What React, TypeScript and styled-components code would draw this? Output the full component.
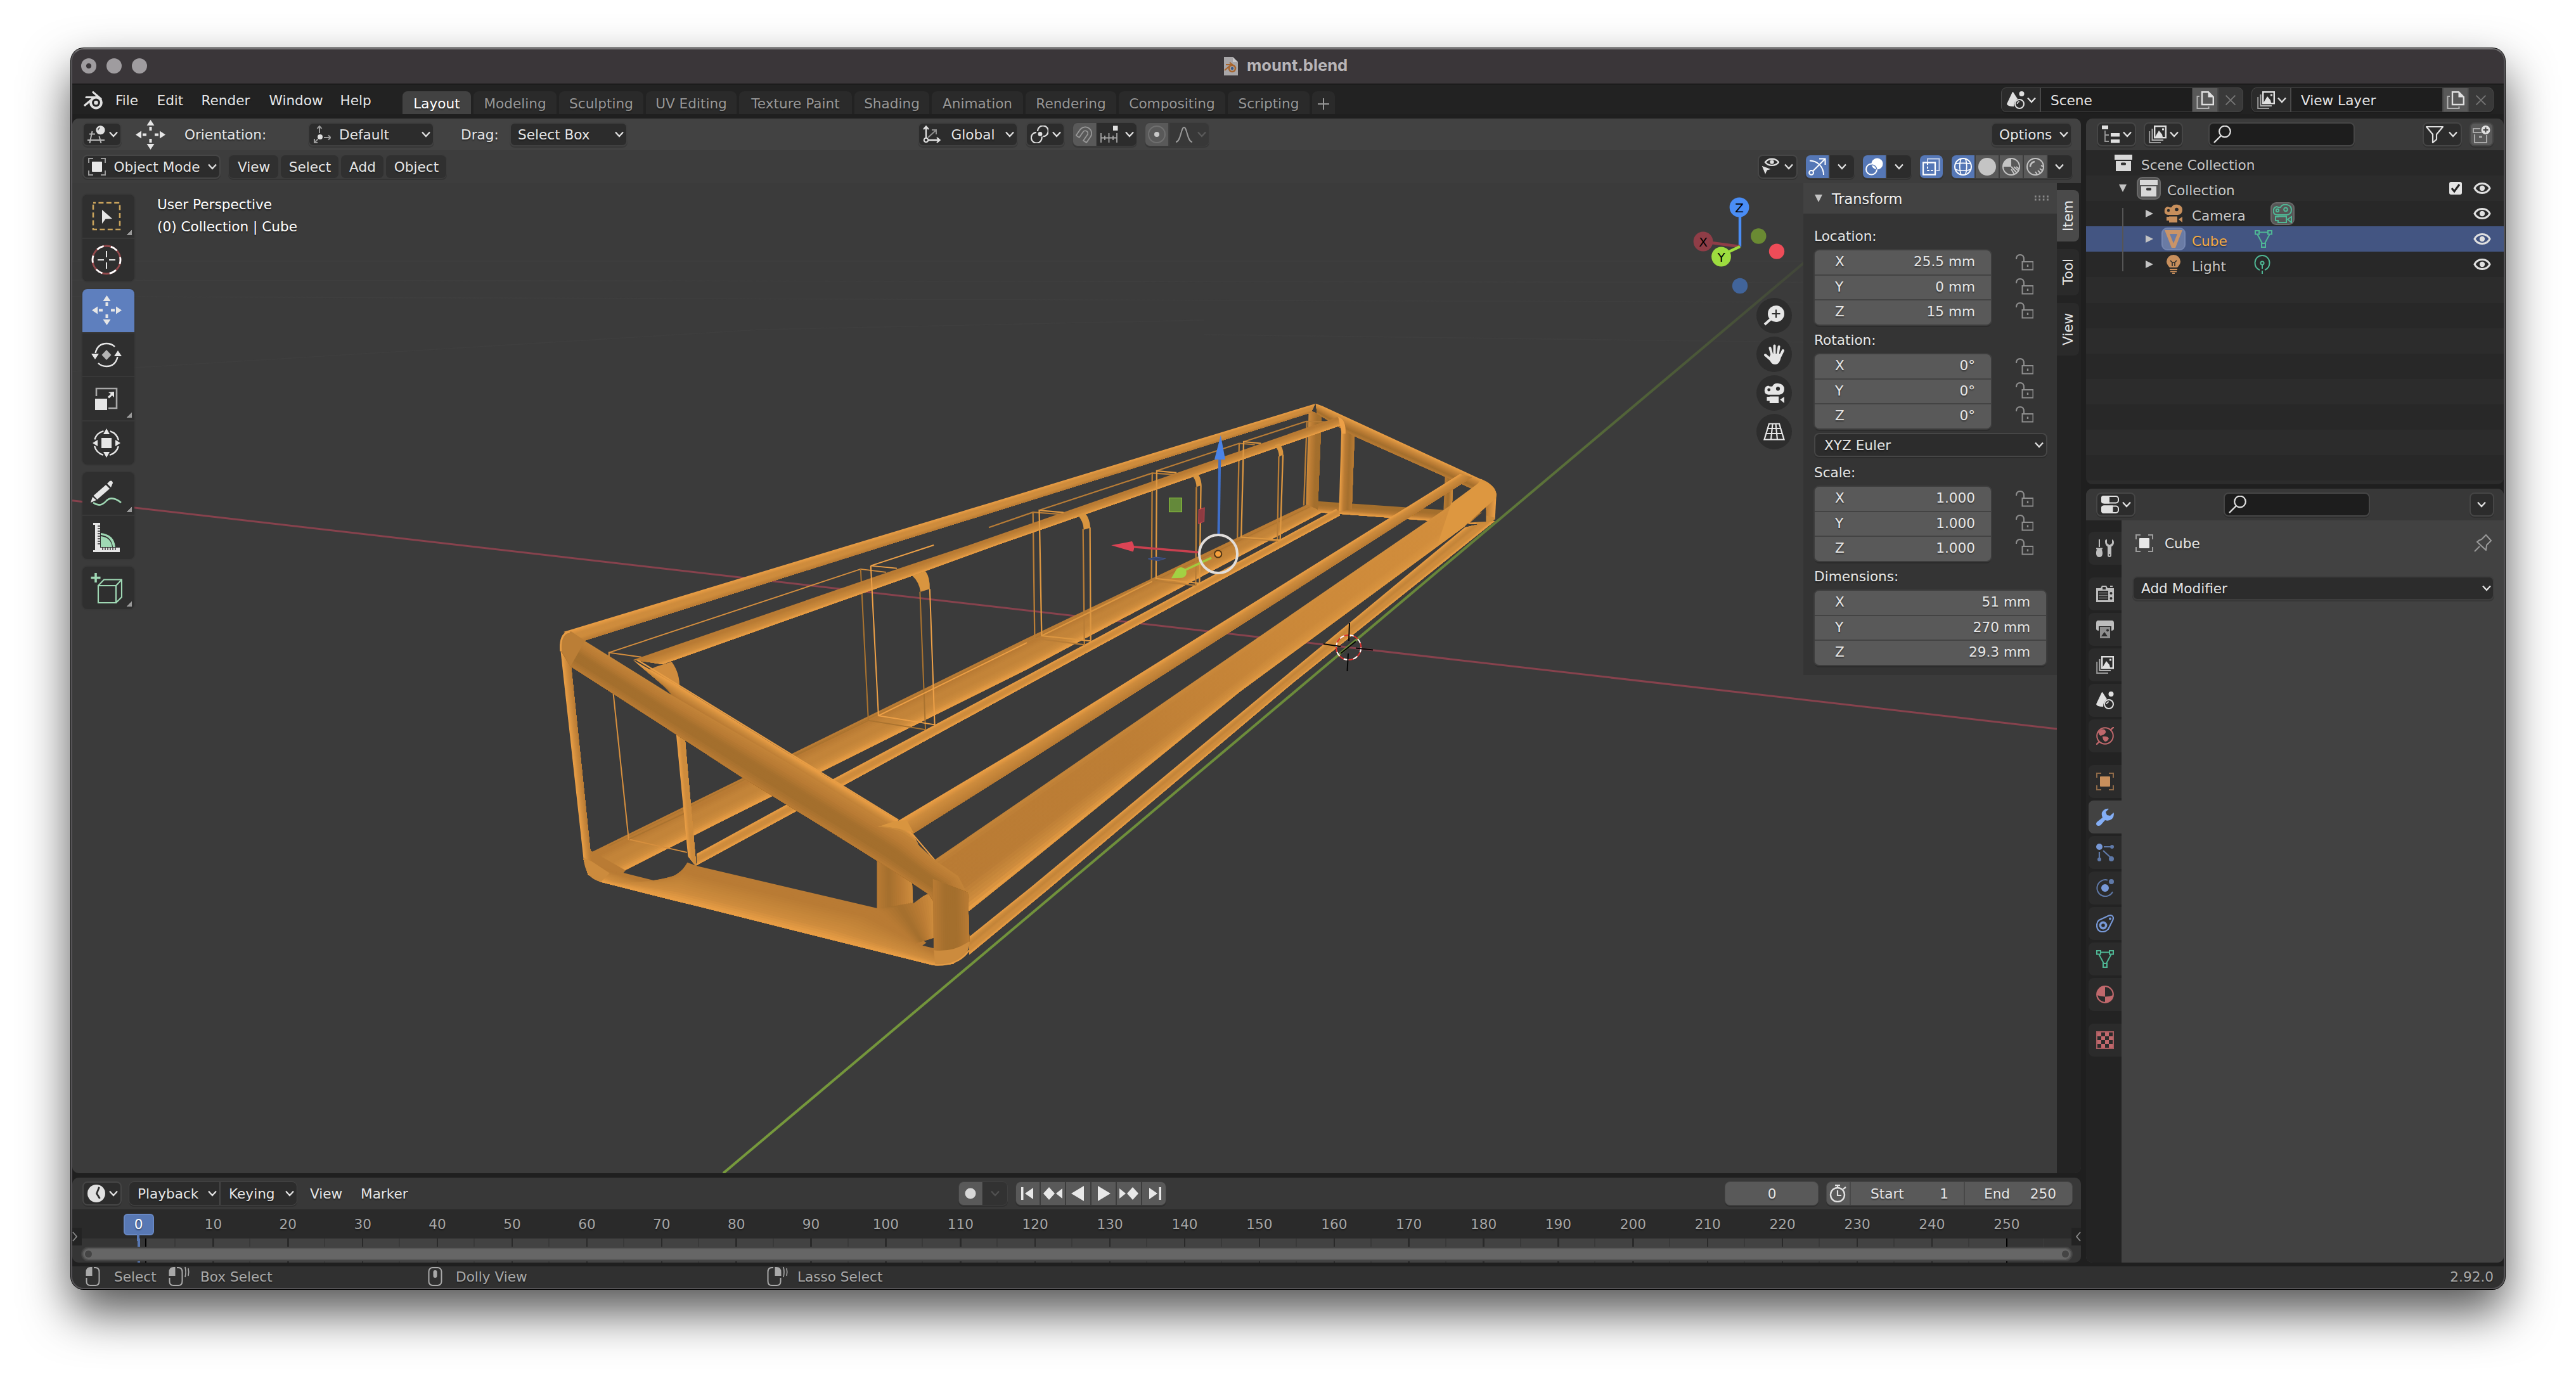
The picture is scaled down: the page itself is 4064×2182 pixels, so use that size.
import React from "react";
import styled, { createGlobalStyle, css } from "styled-components";

/* ---------- base ---------- */

const Global = createGlobalStyle`
  * { box-sizing: border-box; }
  html, body { margin: 0; padding: 0; background: #fff; }
  body {
    font-family: "DejaVu Sans", sans-serif;
    font-size: 21.6px;
    line-height: 1;
    color: #e6e6e6;
    overflow: hidden;
  }
  svg { display: block; flex: none; }
`;

const Desktop = styled.div`
  width: 4064px;
  height: 2182px;
  padding: 76px 112px 0;
  background: #fff;
  overflow: hidden;
`;

const Window = styled.div`
  position: relative;
  display: flex;
  flex-direction: column;
  width: 3840px;
  height: 1958px;
  padding: 0 2px;
  border-radius: 20px;
  background: #1f1f1f;
  overflow: hidden;
  text-shadow: 0 2px 2px rgba(0, 0, 0, 0.4);
  &::after {
    content: "";
    position: absolute;
    inset: 0;
    border: 2px solid #555356;
    border-top-color: #757375;
    border-radius: 20px;
    pointer-events: none;
  }
`;

const Shadow = styled.div`
  border-radius: 20px;
  box-shadow: 0 0 0 1px #050505, 0 36px 76px rgba(0, 0, 0, 0.68);
`;

const TitleBar = styled.div`
  display: flex;
  align-items: center;
  height: 57px;
  margin: 0 -2px;
  background: #3a3639;
  border-bottom: 1px solid #000;
  flex: none;
`;

const Lights = styled.div`
  display: flex;
  gap: 16px;
  padding-left: 16px;
  width: 1819px;
`;

const Light = styled.i<{ $dot?: boolean }>`
  width: 24px;
  height: 24px;
  border-radius: 50%;
  background: ${(p) =>
    p.$dot ? "radial-gradient(circle, #3a3639 0 3.6px, #9f9c9f 4.6px)" : "#9f9c9f"};
`;

const FileTitle = styled.span`
  margin: -3px 0 0 14px;
  font-family: Inter, sans-serif;
  font-weight: 700;
  font-size: 25.6px;
  color: #b8b5b8;
  text-shadow: none;
`;

/* ---------- generic parts ---------- */

const Spacer = styled.div`
  flex: 1;
`;

const Chev = ({ c = "#e0e0e0" }: { c?: string }) => (
  <svg width="16" height="10" viewBox="0 0 16 10">
    <path d="M2 1.5 L8 8 L14 1.5" fill="none" stroke={c} strokeWidth="2.4" />
  </svg>
);

type BoxProps = { $w?: number; $ml?: number; $bg?: string; $line?: string; $pl?: number; $pr?: number };

const Box = styled.div<BoxProps>`
  display: flex;
  align-items: center;
  justify-content: space-between;
  flex: none;
  width: ${(p) => (p.$w ? p.$w + "px" : "auto")};
  height: 38px;
  margin-left: ${(p) => p.$ml ?? 0}px;
  padding: 0 ${(p) => p.$pr ?? 6}px 0 ${(p) => p.$pl ?? 6}px;
  background: ${(p) => p.$bg ?? "#2c2c2c"};
  border: 2px solid ${(p) => p.$line ?? "#464646"};
  border-radius: 8px;
  box-shadow: 0 2px 0 rgba(0, 0, 0, 0.16);
  white-space: nowrap;
`;

const Join = styled.div<{ $ml?: number; $line?: string; $h?: number; $gap?: number }>`
  display: flex;
  flex: none;
  gap: ${(p) => p.$gap ?? 2}px;
  height: ${(p) => p.$h ?? 38}px;
  margin-left: ${(p) => p.$ml ?? 0}px;
  background: ${(p) => p.$line ?? "#3d3d3d"};
  border: 1px solid ${(p) => p.$line ?? "#3d3d3d"};
  border-radius: 8px;
  overflow: hidden;
  box-shadow: 0 2px 0 rgba(0, 0, 0, 0.16);
`;

const Seg = styled.div<{ $w: number; $bg?: string; $pl?: number; $pr?: number; $between?: boolean; $round?: boolean }>`
  display: flex;
  align-items: center;
  justify-content: ${(p) => (p.$between ? "space-between" : "center")};
  flex: none;
  width: ${(p) => p.$w}px;
  padding: 0 ${(p) => p.$pr ?? 0}px 0 ${(p) => p.$pl ?? 0}px;
  background: ${(p) => p.$bg ?? "#2c2c2c"};
  border-radius: ${(p) => (p.$round ? 7 : 0)}px;
  white-space: nowrap;
`;

const Txt = styled.span<{ $w?: number; $ml?: number; $c?: string }>`
  flex: none;
  width: ${(p) => (p.$w ? p.$w + "px" : "auto")};
  margin-left: ${(p) => p.$ml ?? 0}px;
  padding: 2px 0 0 1px;
  color: ${(p) => p.$c ?? "inherit"};
  white-space: nowrap;
`;

const Slot = styled.div<{ $w?: number; $ml?: number }>`
  flex: none;
  width: ${(p) => (p.$w ? p.$w + "px" : "auto")};
  margin-left: ${(p) => p.$ml ?? 0}px;
`;

/* ---------- icons ---------- */

const W = "#e0e0e0";

const Ico = ({ s = 28, v = 28, children }: { s?: number; v?: number; children: React.ReactNode }) => (
  <svg width={s} height={s} viewBox={`0 0 ${v} ${v}`} fill="none" stroke={W} strokeWidth="2">
    {children}
  </svg>
);

const BlenderLogo = () => (
  <svg width="31" height="29" viewBox="0 0 31 29" fill="none">
    <path d="M15 1.6 L27 12" stroke={W} strokeWidth="3.2" strokeLinecap="round" />
    <path d="M4 9.5 H20" stroke={W} strokeWidth="3" strokeLinecap="round" />
    <path d="M2 22 L15 11" stroke={W} strokeWidth="3.4" strokeLinecap="round" />
    <circle cx="19.5" cy="18" r="8.4" stroke={W} strokeWidth="4" />
    <circle cx="19.5" cy="18" r="3.3" fill={W} />
  </svg>
);

const BlendFile = () => (
  <svg width="22" height="29" viewBox="0 0 22 29" fill="none">
    <path d="M0 0 H14 L22 8 V29 H0 Z" fill="#a8a6a8" />
    <path d="M14 0 L22 8 H14 Z" fill="#c9c7c9" />
    <circle cx="13" cy="18" r="5" stroke="#a8652e" strokeWidth="2.6" />
    <circle cx="13" cy="18" r="2.2" fill="#3a5a86" />
    <path d="M3 12 H13 M1 21 L9 14 M9 8.5 L17 15" stroke="#a8652e" strokeWidth="2.2" />
  </svg>
);

const Icons: Record<string, React.ReactNode> = {
  editor3d: (
    <>
      <circle cx="20.5" cy="7.2" r="7" fill={W} stroke="none" />
      <path d="M16.8 7.5a4 4 0 0 1 3-4" stroke="#555" strokeWidth="1.5" />
      <path d="M3 13.5H12M0 23H27M7.5 9L3.5 28M18.5 17L21.5 28" stroke="#b5b5b5" />
    </>
  ),
  local: (
    <>
      <circle cx="11" cy="18" r="4" fill={W} stroke="none" />
      <path d="M10 12V1.5M6.5 5L10 1L13.5 5M17 19H27M24 15.5L27.5 19L24 22.5M7.5 21.5L2 27M2 21V27H7" stroke="#9a9a9a" />
    </>
  ),
  global: (
    <>
      <path d="M5 20V2M1 6L5 1.5L9 6M9 23H26M22 19L26.5 23L22 27" stroke={W} strokeWidth="2.3" />
      <circle cx="5" cy="23" r="3.3" stroke={W} />
      <path d="M8 19L20 8M14 7H21V14" stroke="#8f8f8f" strokeWidth="2" />
    </>
  ),
  pivot: (
    <>
      <path d="M11 9A8.4 8.4 0 1 1 19.5 17.2" strokeWidth="2.2" />
      <path d="M9 10.8A8.4 8.4 0 1 0 17.5 17.5" strokeWidth="2.2" />
      <circle cx="15" cy="13.4" r="3.4" fill={W} stroke="none" />
    </>
  ),
  magnet: (
    <g transform="rotate(35 14 14)" stroke="#989898" strokeWidth="1.8">
      <path d="M4 23V12a10 10 0 0 1 20 0V23H18V12a4 4 0 0 0-8 0V23Z" />
    </g>
  ),
  snap: (
    <>
      <rect x="20" y="0.5" width="7.5" height="7.5" fill={W} stroke="none" />
      <path d="M1 12V27M26 12V27M1 19.5H26M7 16V23M13.5 12V27M20 16V23" stroke="#a5a5a5" strokeWidth="1.8" />
    </>
  ),
  propEdit: (
    <>
      <circle cx="14" cy="14" r="13" stroke="#707070" />
      <circle cx="14" cy="14" r="4" fill="#c8c8c8" stroke="none" />
    </>
  ),
  falloff: <path d="M1 26C9 26 9 3 14 3S19 26 27 26" stroke="#999" />,
  eyeCursor: (
    <>
      <path d="M6 7C11 0 22 0 27 7C22 13.5 11 13.5 6 7Z" strokeWidth="2.4" />
      <circle cx="16.500" cy="6.6" r="3.2" fill={W} stroke="none" />
      <path d="M0 12L6 27L9 20L16 18Z" fill={W} stroke="#2c2c2c" strokeWidth="1" />
    </>
  ),
  gizmo: (
    <g stroke="#fff">
      <circle cx="4.6" cy="23.4" r="3.4" />
      <path d="M7 21L26 2M17 1.5H26.5V11" />
      <path d="M2 4.5C14 4.5 24 14 24 27" />
    </g>
  ),
  overlay: (
    <g stroke="#fff">
      <circle cx="18.5" cy="9.5" r="9" fill="#fff" stroke="none" />
      <circle cx="9.5" cy="18" r="8.5" />
      <path d="M10 11A8.5 8.5 0 0 1 18 18.500" stroke="#5577b6" strokeWidth="1.6" />
    </g>
  ),
  xray: (
    <g stroke="#fff">
      <path d="M8 6V1.5H26.5V20H22" stroke="#c3cfe8" />
      <rect x="1" y="7.5" width="19" height="19" strokeWidth="2.3" />
      <path d="M8 8V20H20" strokeDasharray="3.2 2.6" />
    </g>
  ),
  wire: (
    <g stroke="#fff">
      <circle cx="14" cy="14" r="13" />
      <path d="M2 9.500C8 8 20 8 26 9.500M1 18C8 21 20 21 27 18M11 1C8 8 8 20 11 27M17.5 1C20.5 8 20.5 20 17.5 27" strokeWidth="1.7" />
    </g>
  ),
  solid: <circle cx="14" cy="14" r="14" fill="#c4c4c4" stroke="none" />,
  matprev: (
    <g stroke="#c4c4c4">
      <path d="M14 0.5A13.5 13.5 0 0 0 0.5 14H14Z" fill="#c4c4c4" stroke="none" />
      <circle cx="14" cy="14" r="13" />
      <path d="M14 14L23 24M18 14L26 21M14 18L19 26M22 14L27 18" />
    </g>
  ),
  rendered: (
    <g stroke="#c4c4c4">
      <circle cx="14" cy="14" r="13" />
      <path d="M6 14a8 8 0 0 1 7-8" strokeWidth="2.6" />
      <path d="M23 12L27 14M21 17L25 20M18 20L22 24M14 22L17 26" />
    </g>
  ),
  scene: (
    <>
      <path d="M0 20L8.5 2Q9.5 0 10.5 2L17 12Q11 16 11 24Q1 24 0 20Z" fill={W} stroke="none" />
      <circle cx="23.5" cy="4" r="4" fill={W} stroke="none" />
      <circle cx="20" cy="20" r="7" />
      <path d="M16.5 20a3.5 3.5 0 0 1 3.4-3.6" strokeWidth="1.6" />
    </>
  ),
  layers: (
    <>
      <rect x="9.2" y="1.2" width="17.6" height="18" strokeWidth="2.4" />
      <path d="M10 18L16 8L21 14L22 18Z" fill={W} stroke="none" />
      <rect x="21" y="4.5" width="3" height="3" fill={W} stroke="none" />
      <path d="M5.5 5V23H23" stroke="#b0b0b0" />
      <path d="M1.2 9V27H19" stroke="#9a9a9a" />
    </>
  ),
  dup: (
    <>
      <path d="M9 1.2H19L26.8 9V21H9Z" strokeWidth="2.4" />
      <path d="M18.5 1V9.5H27Z" fill={W} stroke="none" />
      <path d="M5 8H1.5V27H19.5V24" stroke="#b4b4b4" />
    </>
  ),
  x: <path d="M6 6L22 22M22 6L6 22" stroke="#767676" strokeWidth="2" />,
  outliner: (
    <>
      <rect x="0" y="0" width="10" height="6" fill={W} stroke="none" />
      <rect x="14" y="12" width="14" height="5.5" fill={W} stroke="none" />
      <rect x="14" y="22" width="14" height="5.5" fill={W} stroke="none" />
      <path d="M5 8V25H11M5 15H11" stroke="#999" strokeWidth="1.8" />
    </>
  ),
  search: (
    <>
      <circle cx="18" cy="9.5" r="8.8" strokeWidth="2.2" />
      <path d="M12 16L1 27" strokeWidth="2.4" />
    </>
  ),
  filter: <path d="M1 2H27L17 14V22L11 27V14Z" strokeLinejoin="round" strokeWidth="2.2" />,
  newColl: (
    <>
      <path d="M12 5H1V11H14" stroke="#a8a8a8" />
      <path d="M3 14V27H22V15" stroke="#a8a8a8" />
      <path d="M10 18H15" stroke="#a8a8a8" strokeWidth="3" />
      <circle cx="20.5" cy="7" r="7" fill={W} stroke="none" />
      <path d="M20.5 3V11M16.5 7H24.5" stroke="#444" />
    </>
  ),
  collection: (
    <>
      <rect x="0" y="1" width="28" height="8" fill="#d8d8d8" stroke="none" />
      <rect x="2" y="11" width="24" height="16" fill="#d8d8d8" stroke="none" />
      <rect x="10" y="13.5" width="8" height="4" rx="1.5" fill="#333" stroke="none" />
    </>
  ),
  eye: (
    <>
      <path d="M2 14C7 4 21 4 26 14C21 24 7 24 2 14Z" strokeWidth="3" stroke={W} />
      <circle cx="14" cy="14" r="4.2" fill={W} stroke="none" />
    </>
  ),
  propsEd: (
    <>
      <rect x="1" y="1" width="26" height="10.5" rx="4" />
      <path d="M1 3Q1 1 4 1H12V11.5H4Q1 11.5 1 9Z" fill={W} />
      <rect x="1" y="16.5" width="26" height="10.5" rx="4" />
      <path d="M1 19Q1 16.5 4 16.5H17.5V27H4Q1 27 1 24Z" fill={W} />
    </>
  ),
  objectW: (
    <>
      <rect x="6" y="6" width="16" height="16" rx="1" fill="#e8e8e8" stroke="none" />
      <path d="M1 8V1H8M20 1H27V8M27 20V27H20M8 27H1V20" stroke="#9c9c9c" />
    </>
  ),
  object: (
    <>
      <rect x="6" y="6" width="16" height="16" rx="1" fill="#c88f5c" stroke="none" />
      <path d="M1 8V1H8M20 1H27V8M27 20V27H20M8 27H1V20" stroke="#8f6a48" />
    </>
  ),
  tools: (
    <g stroke="none" fill="#bdbdbd">
      <rect x="4" y="0" width="2" height="12" />
      <path d="M0 13.5H10V15.5H8.5Q10.5 19 10 23Q9.5 28 5 28T0 23Q-.5 19 1.5 15.5H0Z" />
      <path d="M14 3Q14 0 17 0V6L21 9L25 6V0Q28 1 28 5Q28 9 24 11.5V25Q24 28 21 28T18 25V11.5Q14 9 14 3Z" />
      <circle cx="21" cy="24.5" r="1.2" fill="#2b2b2b" />
    </g>
  ),
  render: (
    <g stroke="none" fill="#bdbdbd">
      <path d="M0 5H7L9 1H16L18 5H28V27H0Z" />
      <rect x="22" y="1" width="4" height="2" />
      <rect x="10" y="3" width="5" height="4" fill="#2b2b2b" />
      <rect x="3" y="9" width="16" height="15" fill="#2b2b2b" />
      <path d="M4 12.5H18M4 16.5H18M4 20.5H18" stroke="#777" strokeWidth="1.6" />
      <circle cx="23.5" cy="13" r="2" fill="#2b2b2b" />
      <circle cx="23.5" cy="21" r="2" fill="#2b2b2b" />
    </g>
  ),
  output: (
    <g stroke="none" fill="#bdbdbd">
      <path d="M3 0H25Q28 0 28 4V13Q28 16 24 16V9H4V16Q0 16 0 13V4Q0 0 3 0Z" />
      <path d="M6 10H22V28H6Z" fill="#8d8d8d" />
      <path d="M8 25L13 18L18 25Z" fill="#2b2b2b" />
      <circle cx="18" cy="15.5" r="2" fill="#2b2b2b" />
    </g>
  ),
  world: (
    <g stroke="#c0686c">
      <circle cx="14" cy="14" r="12.8" />
      <path d="M22 5L28 0M0 28L5 23" strokeWidth="2.4" />
      <path d="M3 8Q8 2 13 4Q18 8 12 12L7 14Q4 12 3 8Z M10 15Q18 14 20 18Q18 23 14 23Q10 20 10 15Z" fill="#c0686c" stroke="none" />
    </g>
  ),
  wrench: (
    <path
      d="M1 22L10 15Q7 8 11 4Q15 0 20 1L15 6L17 11L22 12L27.5 7Q29 13 25 17Q20 21 14 19L7 27Q3 29 1 27Q-1 25 1 22Z"
      fill="#84aef5"
      stroke="none"
    />
  ),
  particles: (
    <g stroke="#5f79a8" fill="#5f79a8">
      <circle cx="5" cy="5" r="5" fill="#7798d6" stroke="none" />
      <path d="M12 5H24M11 11L24 23M5 13V24" strokeWidth="2.2" />
      <circle cx="25" cy="5" r="3" stroke="none" />
      <circle cx="24" cy="24" r="4" stroke="none" />
      <circle cx="5" cy="25" r="3" stroke="none" />
    </g>
  ),
  physics: (
    <g stroke="#5f79a8">
      <path d="M18 1.6A13 13 0 1 0 26 20" />
      <circle cx="14" cy="14" r="6" fill="#7798d6" stroke="none" />
      <circle cx="24" cy="4" r="4" fill="#5f79a8" stroke="none" />
    </g>
  ),
  constraint: (
    <g stroke="#7798d6">
      <path d="M4 9L20 1.5Q26 0 27 5Q27 8 25 11L19 23Q14 28 8 27Q1 25 1 17Q1 12 4 9Z" strokeWidth="2.2" />
      <circle cx="11" cy="17" r="4.6" strokeWidth="3.6" />
      <circle cx="22" cy="6.5" r="2" fill="#7798d6" stroke="none" />
    </g>
  ),
  mesh: (
    <g stroke="#4fb795" strokeWidth="2">
      <rect x="1" y="1" width="6" height="5.5" />
      <rect x="21" y="1" width="6" height="5.5" />
      <rect x="11" y="21" width="6" height="6" />
      <path d="M7 3.5H21M4.5 7L12 21M23.5 7L16 21" />
    </g>
  ),
  material: (
    <g stroke="#c0686c">
      <circle cx="14" cy="14" r="12.8" strokeWidth="2.2" />
      <path d="M14 1A13 13 0 0 0 1 15Q7 17 14 17.5Z" fill="#c0686c" stroke="none" />
      <path d="M14 17.5Q21 17.5 27 15A13 13 0 0 1 14 27Z" fill="#c0686c" stroke="none" />
    </g>
  ),
  texture: (
    <g stroke="#a85c60">
      <rect x="1" y="1" width="26" height="26" />
      {[0, 1, 2, 3].map((r) =>
        [0, 1, 2, 3].map((c) =>
          (r + c) % 2 === 0 ? (
            <rect key={`${r}${c}`} x={2 + c * 6} y={2 + r * 6} width="6" height="6" fill="#c0686c" stroke="none" />
          ) : null
        )
      )}
    </g>
  ),
  clock: (
    <>
      <circle cx="14" cy="14" r="14" fill={W} stroke="none" />
      <path d="M18.500 4L14.500 14L19.500 22" stroke="#2c2c2c" strokeWidth="2.8" />
    </>
  ),
  stopwatch: (
    <>
      <circle cx="13" cy="16" r="11" strokeWidth="2.4" />
      <path d="M9 1.2H17M13 2V5M13 9V17H19M22 7L26 4" strokeWidth="2.2" />
    </>
  ),
  pin: (
    <path d="M1 27L9 19M5 12L19 25L20 17L27 10L19 1L12 8Q8 9 5 12Z" stroke="#9a9a9a" strokeLinejoin="round" />
  ),
  lock: (
    <g stroke="#8e8e8e">
      <path d="M1 9Q1 2 7 2T13 9V12" />
      <rect x="10.5" y="13" width="17" height="12.5" />
      <path d="M19 17.5V21" strokeWidth="2.4" />
    </g>
  ),
};

const I = ({ n, s }: { n: string; s?: number }) => <Ico s={s}>{Icons[n]}</Ico>;

const MovieCam = ({ c = "#c88f5c", outline = false, s = 30 }: { c?: string; outline?: boolean; s?: number }) => (
  <svg width={s} height={s} viewBox="0 0 30 30" fill={outline ? "none" : c} stroke={outline ? c : "none"} strokeWidth="2">
    <path d="M6 4Q9 6 12 5Q14 0 21 0.8Q29 2 29 9T22 17H6Q0 16 0.8 10Q1 5 6 4Z" />
    <circle cx="7" cy="10" r="2.2" fill={outline ? "none" : "#2b2b2b"} />
    <circle cx="20" cy="8.5" r="2.8" fill={outline ? "none" : "#2b2b2b"} />
    <path d="M8 19.5H21V29H8V26H4V20H8Z" />
    <path d="M23 24L29 20V29Z" />
  </svg>
);

const Bulb = () => (
  <svg width="26" height="30" viewBox="0 0 26 30" fill="#c88f5c">
    <path d="M13 0A11 11 0 0 1 24 10.5Q24 15 19 20H7Q2 15 2 10.5A11 11 0 0 1 13 0Z" />
    <path d="M8 9L11 12H15L18 9M11 12V18M15 12V18" stroke="#2b2b2b" strokeWidth="1.6" fill="none" />
    <rect x="7" y="22" width="12" height="2" />
    <rect x="8" y="25.4" width="10" height="2" />
    <rect x="11" y="28.5" width="4" height="1.5" />
  </svg>
);

const LightData = () => (
  <svg width="26" height="30" viewBox="0 0 26 30" fill="none" stroke="#4fb795" strokeWidth="2">
    <path d="M9 24Q1.5 21 1.5 12.5A11.5 11.5 0 0 1 24.5 12.5Q24.5 21 17 24" />
    <circle cx="13" cy="13" r="2.6" />
    <path d="M13 16V22M13 25V30" />
  </svg>
);

/* ---------- top bar ---------- */

const TopBar = styled.div`
  display: flex;
  height: 47px;
  flex: none;
  padding-left: 18px;
  background: #222;
`;

const Menus = styled.div`
  display: flex;
  align-items: center;
  height: 50px;
  width: 503px;
`;

const Tabs = styled.div`
  display: flex;
  align-items: flex-end;
  gap: 4px;
  height: 47px;
`;

const Tab = styled.div<{ $w: number; $on?: boolean }>`
  display: flex;
  align-items: center;
  justify-content: center;
  width: ${(p) => p.$w}px;
  height: 36px;
  padding-top: 4px;
  border-radius: 8px 8px 0 0;
  background: ${(p) => (p.$on ? "#424242" : "#2a2a2a")};
  color: ${(p) => (p.$on ? "#fff" : "#979797")};
  white-space: nowrap;
`;

const Idents = styled.div`
  display: flex;
  gap: 13px;
  padding: 5px 16px 0 0;
`;

const tabs: [string, number][] = [
  ["Layout", 108],
  ["Modeling", 131],
  ["Sculpting", 133],
  ["UV Editing", 143],
  ["Texture Paint", 178],
  ["Shading", 118],
  ["Animation", 144],
  ["Rendering", 143],
  ["Compositing", 168],
  ["Scripting", 129],
  ["+", 36],
];

const DataBlock = ({ icon, name }: { icon: string; name: string }) => (
  <Join $h={39} $line="#484848">
    <Seg $w={60} $between $pl={8} $pr={5} $bg="#2b2b2b">
      <I n={icon} />
      <Chev />
    </Seg>
    <Seg $w={238} $between $pl={14} $bg="#1e1e1e">
      <Txt>{name}</Txt>
    </Seg>
    <Seg $w={38} $bg="#595959">
      <I n="dup" />
    </Seg>
    <Seg $w={38} $bg="#393939">
      <I n="x" s={26} />
    </Seg>
  </Join>
);

/* ---------- areas ---------- */

const Main = styled.div`
  display: flex;
  gap: 8px;
  height: 1805px;
  margin-top: 7px;
  flex: none;
`;

const Column = styled.div<{ $w: number }>`
  display: flex;
  flex-direction: column;
  gap: 7px;
  width: ${(p) => p.$w}px;
  flex: none;
`;

const Area = styled.div<{ $h: number; $bg?: string }>`
  position: relative;
  display: flex;
  flex-direction: column;
  height: ${(p) => p.$h}px;
  flex: none;
  background: ${(p) => p.$bg ?? "#3b3b3b"};
  border-radius: 10px;
  overflow: hidden;
`;

const Header = styled.div<{ $bg?: string; $h?: number; $pr?: number; $pl?: number }>`
  position: relative;
  display: flex;
  align-items: center;
  height: ${(p) => p.$h ?? 50}px;
  flex: none;
  padding: 0 ${(p) => p.$pr ?? 14}px 0 ${(p) => p.$pl ?? 16}px;
  background: ${(p) => p.$bg ?? "#383838"};
`;

const Scene3D = styled.svg`
  position: absolute;
  inset: 0;
`;

const Body = styled.div`
  position: relative;
  display: flex;
  flex: 1;
`;

/* toolbar */

const ToolColumn = styled.div`
  display: flex;
  flex-direction: column;
  gap: 12px;
  margin: 18px 0 0 16px;
  width: 82px;
`;

const ToolGroup = styled.div`
  display: flex;
  flex-direction: column;
  gap: 2px;
  border-radius: 8px;
  overflow: hidden;
  background: #383838;
  box-shadow: 0 0 0 2px rgba(0, 0, 0, 0.05);
`;

const Tool = styled.div<{ $on?: boolean; $more?: boolean }>`
  display: flex;
  align-items: center;
  justify-content: center;
  height: 67.6px;
  padding-right: 6px;
  background: ${(p) =>
    (p.$more ? "linear-gradient(135deg, transparent 50%, #9a9a9a 50%) right 4px bottom 4px / 8px 8px no-repeat, " : "") +
    (p.$on ? "#5e7fbe" : "#2f2f2f")};
`;

const ViewInfo = styled.div`
  display: flex;
  flex-direction: column;
  gap: 11.6px;
  margin: 21px 0 0 35px;
  color: #fff;
  white-space: nowrap;
`;

const NavColumn = styled.div`
  display: flex;
  flex-direction: column;
  gap: 5px;
  width: 175px;
  padding-top: 16px;
`;

const NavBtn = styled.div`
  display: flex;
  align-items: center;
  justify-content: center;
  width: 56px;
  height: 56px;
  margin-left: 101px;
  border-radius: 50%;
  background: #2d2d2d;
`;

/* N panel */

const Panel = styled.div`
  width: 400px;
  height: 776px;
  flex: none;
  background: #343434;
`;

const PanelHead = styled.div`
  display: flex;
  align-items: center;
  justify-content: space-between;
  height: 48px;
  padding: 0 13px 0 18px;
  background: #424242;
  color: #f0f0f0;
`;

const PanelBody = styled.div`
  padding: 16px 16px 0 18px;
`;

const PanelTitle = styled.div`
  display: flex;
  align-items: center;
  gap: 14px;
  font-size: 22.4px;
`;

const Label = styled.div`
  display: flex;
  align-items: center;
  height: 38px;
  margin: 5px 0 4px -2px;
  &:first-child { margin-top: 0; }
`;

const FieldRow = styled.div`
  display: flex;
`;

const Fields = styled.div<{ $w: number }>`
  display: flex;
  flex-direction: column;
  gap: 2px;
  width: ${(p) => p.$w}px;
  height: 117px;
  border-radius: 7px;
  overflow: hidden;
  background: #434343;
  box-shadow: 0 0 0 2px #3d3d3d, 0 4px 0 #2c2c2c;
`;

const Field = styled.div`
  display: flex;
  align-items: center;
  justify-content: space-between;
  flex: 1;
  padding: 0 25px 4px 31px;
  background: #595959;
`;

const Locks = styled.div`
  display: flex;
  flex-direction: column;
  justify-content: space-around;
  margin-left: 39px;
  padding-bottom: 3px;
`;

const Strip = styled.div`
  display: flex;
  flex-direction: column;
  gap: 12px;
  width: 38px;
  padding-top: 11px;
  background: #232323;
`;

const StripTab = styled.div<{ $h: number; $on?: boolean }>`
  display: flex;
  align-items: center;
  justify-content: center;
  width: 35px;
  height: ${(p) => p.$h}px;
  writing-mode: vertical-rl;
  transform: rotate(180deg);
  border-radius: 8px 0 0 8px;
  background: ${(p) => (p.$on ? "#4a4a4a" : "#2a2a2a")};
  text-shadow: none;
`;

/* outliner */

const Row = styled.div<{ $odd?: boolean; $sel?: boolean; $pl: number }>`
  display: flex;
  align-items: center;
  height: 40.1px;
  flex: none;
  padding: 0 20px 0 ${(p) => p.$pl}px;
  background: ${(p) => (p.$sel ? "#435582" : p.$odd ? "#2c2c2c" : "#282828")};
  color: ${(p) => (p.$sel ? "#f5ab42" : "#c8c8c8")};
`;

const RowText = styled(Txt)`
  padding-top: 7px;
`;

const Hl = styled.div<{ $on?: boolean; $blue?: boolean }>`
  display: flex;
  align-items: center;
  justify-content: center;
  width: 38px;
  height: 36px;
  border-radius: 9px;
  flex: none;
  ${(p) =>
    p.$on &&
    css`
      background: ${p.$blue ? "#6a7ba4" : "#565656"};
      border: 2px solid ${p.$blue ? "#7486b0" : "#6a6a6a"};
    `}
`;

const Check = styled.div`
  display: flex;
  align-items: center;
  justify-content: center;
  width: 20px;
  height: 20px;
  border-radius: 3px;
  background: #e4e4e4;
  margin-right: 18px;
`;

const TreeLine = styled.i`
  position: absolute;
  left: 57px;
  top: 141px;
  width: 2px;
  height: 100px;
  background: #555;
`;

const Tri = ({ down, c = "#c3c3c3" }: { down?: boolean; c?: string }) => (
  <svg width="12" height="14" viewBox="0 0 12 14">
    <path d={down ? "M0 1H12L6 13Z" : "M0 1V13L12 7Z"} fill={c} />
  </svg>
);

/* properties */

const PropTabs = styled.div`
  display: flex;
  flex-direction: column;
  width: 56px;
  padding: 18px 0 0 4px;
  background: #232323;
`;

const PropTab = styled.div<{ $on?: boolean; $gap?: boolean }>`
  display: flex;
  align-items: center;
  justify-content: center;
  height: 52px;
  margin-bottom: ${(p) => (p.$gap ? 20 : 4)}px;
  border-radius: 8px 0 0 8px;
  background: ${(p) => (p.$on ? "#424242" : "#2b2b2b")};
`;

const PropBody = styled.div`
  display: flex;
  flex-direction: column;
  flex: 1;
  padding: 15px 15px 0 17px;
  background: #424242;
`;

const Crumb = styled.div`
  display: flex;
  align-items: center;
  height: 42px;
  margin-bottom: 31px;
  padding: 0 4px 0 5px;
`;

/* timeline */

const STEP = 117.9;

const Ruler = styled.div`
  display: flex;
  height: 46px;
  padding: 1px 0 0 45.6px;
  background: #2a2a2a;
  color: #a6a6a6;
  flex: none;
`;

const Mark = styled.div`
  display: flex;
  align-items: center;
  justify-content: center;
  flex: none;
  width: ${STEP}px;
`;

const Playhead = styled.div`
  width: 48px;
  height: 34px;
  display: flex;
  align-items: center;
  justify-content: center;
  border: 2px solid #6888c4;
  border-radius: 6px;
  background: #5878b4;
  color: #fff;
`;

const Track = styled.div`
  position: relative;
  display: flex;
  height: 38px;
  padding-left: 45.6px;
  background: linear-gradient(90deg, #353535 116px, #424242 116px 3052px, #353535 3052px);
`;

const TickCell = styled.div`
  display: flex;
  justify-content: center;
  flex: none;
  width: ${STEP}px;
  border-right: 2px solid #393939;
`;

const Tick = styled.i<{ $play?: boolean; $end?: boolean }>`
  width: ${(p) => (p.$play ? 4 : 2.4)}px;
  margin-left: 2px;
  background: ${(p) => (p.$play ? "#5878b4" : p.$end ? "#000" : "#2a2a2a")};
`;

const StartLine = styled.i`
  position: absolute;
  left: 115px;
  top: 0;
  width: 2px;
  height: 38px;
  background: #000;
`;

const Stalk = styled.i`
  position: absolute;
  left: 102px;
  top: 88px;
  width: 4px;
  height: 12px;
  background: #5878b4;
`;

const Scroll = styled.div`
  position: absolute;
  left: 16px;
  right: 15px;
  top: 15px;
  height: 19px;
  display: flex;
  align-items: center;
  justify-content: space-between;
  padding: 0 2px;
  border: 2px solid #585858;
  border-radius: 10px;
  background: #666;
  box-shadow: 0 0 0 2px #444;
`;

const Knob = styled.i`
  width: 11px;
  height: 11px;
  border-radius: 50%;
  background: #444;
`;

const Expander = styled.div<{ $right?: boolean }>`
  position: absolute;
  top: 79px;
  ${(p) => (p.$right ? "right: 0;" : "left: 0;")}
  display: flex;
  align-items: center;
  justify-content: ${(p) => (p.$right ? "flex-end" : "flex-start")};
  width: 15px;
  height: 28px;
  background: #232323;
`;

/* status bar */

const Status = styled.div`
  display: flex;
  align-items: center;
  height: 36px;
  margin-top: 6px;
  padding: 0 16px 4px 21px;
  background: #303030;
  color: #a9a9a9;
  flex: none;
`;

const Mouse = ({ b, drag }: { b: "l" | "m" | "r"; drag?: boolean }) => (
  <svg width="34" height="32" viewBox="0 0 34 32" fill="none" stroke="#a9a9a9" strokeWidth="2">
    {b === "m" && (
      <>
        <rect x="1.5" y="2" width="20" height="28" rx="6" />
        <rect x="8.5" y="6" width="6" height="12" rx="3" fill="#a9a9a9" stroke="none" />
      </>
    )}
    {b === "l" && (
      <>
        <path d="M13 2H15.5Q21.5 2 21.5 9V23Q21.5 30 15.5 30H7.5Q1.5 30 1.5 24V18" />
        <path d="M10.5 1V15H0.5V9Q0.5 1 8 1Z" fill="#a9a9a9" stroke="none" />
      </>
    )}
    {b === "r" && (
      <>
        <path d="M10 2H7.5Q1.5 2 1.5 9V23Q1.5 30 7.5 30H15.5Q21.5 30 21.5 24V18" />
        <path d="M12.5 1V15H22.5V9Q22.5 1 15 1Z" fill="#a9a9a9" stroke="none" />
      </>
    )}
    {drag && <path d="M26 1Q28 9 26 17M31 3Q32.5 9 31 15" strokeWidth="1.6" />}
  </svg>
);

/* ---------- tool icons ---------- */

const T = "#e6e6e6";
const MoveIcon = ({ s = 47 }: { s?: number }) => (
  <svg width={s} height={s} viewBox="0 0 47 47" fill={T}>
    <path d="M23.5 0L29.5 9H17.5ZM23.5 47L29.5 38H17.5ZM0 23.5L9 17.5V29.5ZM47 23.5L38 17.5V29.5Z" />
    <path d="M21.5 11H25.5V17H21.5ZM21.5 30H25.5V36H21.5ZM11 21.5H17V25.5H11ZM30 21.5H36V25.5H30Z" />
  </svg>
);

const toolIcon = (n: string) => {
  switch (n) {
    case "select":
      return (
        <svg width="46" height="46" viewBox="0 0 46 46" fill="none">
          <rect x="2" y="2" width="42" height="42" stroke="#c9a35c" strokeWidth="2.6" strokeDasharray="8 4.4" strokeDashoffset="4" />
          <path d="M16 13V35L21.5 27.5L32 27Z" fill={T} />
        </svg>
      );
    case "cursor":
      return (
        <svg width="48" height="48" viewBox="0 0 48 48" fill="none">
          <circle cx="24" cy="24" r="22" stroke="#94494c" strokeWidth="2.8" />
          <circle cx="24" cy="24" r="22" stroke="#fff" strokeWidth="2.8" strokeDasharray="11.5 11.5" strokeDashoffset="5" />
          <path d="M24 10V20M24 28V38M10 24H20M28 24H38" stroke={T} strokeWidth="2" />
        </svg>
      );
    case "move":
      return <MoveIcon />;
    case "rotate":
      return (
        <svg width="48" height="48" viewBox="0 0 48 48" fill="none" stroke={T} strokeWidth="2.4">
          <path d="M6.5 21Q10 6 24 6Q32 6 37 11" />
          <path d="M41.5 27Q38 42 24 42Q16 42 11 37" />
          <path d="M0 22H12L6 31ZM48 26H36L42 17Z" fill={T} stroke="none" />
          <path d="M24 16L31.5 24L24 32L16.5 24Z" fill="#b5b5b5" stroke="none" />
        </svg>
      );
    case "scale":
      return (
        <svg width="38" height="38" viewBox="0 0 38 38" fill="none">
          <path d="M3 15V3H35V34H22" stroke="#a8a8a8" strokeWidth="2.6" />
          <rect x="1" y="19" width="19" height="18" fill={T} />
          <path d="M31 8V17L28 14L23 18.5L21 16L26 11.5L22 9Z" fill={T} />
        </svg>
      );
    case "transform":
      return (
        <svg width="46" height="46" viewBox="0 0 46 46" fill="none">
          <circle cx="23" cy="23" r="19.5" stroke={T} strokeWidth="2.4" strokeDasharray="20 10.63" strokeDashoffset="-5.3" />
          <rect x="15" y="15" width="16" height="16" fill={T} />
          <path d="M23 0L28 9H18ZM23 46L28 37H18ZM1 23L9 18V28ZM45 23L37 18V28Z" fill={T} />
        </svg>
      );
    case "annotate":
      return (
        <svg width="52" height="42" viewBox="0 0 52 42" fill="none">
          <path d="M5 36Q16 44 25 34T49 36" stroke="#9fd8b4" strokeWidth="2.6" />
          <path d="M1 36L4 27L10 32Z" fill={T} />
          <path d="M5.5 25L25 8L31 14L11.5 31Z" fill={T} />
          <path d="M27 6L31 2Q35 0 36 5L33 12Z" fill={T} />
        </svg>
      );
    case "measure":
      return (
        <svg width="44" height="48" viewBox="0 0 44 48" fill="none">
          <path d="M13 17Q34 19 36 39H32Q30 22 13 20Z" fill="#9fd8b4" />
          <path d="M13 22Q29 24 31 39H13Z" fill="#9fd8b4" />
          <path d="M1 1H12V47H1V44H4V4H1Z" fill={T} />
          <path d="M4 40H43V47H4Z" fill={T} />
          <path d="M8 6H12M8 10H12M8 14H12M8 18H12M8 22H12M8 26H12M8 30H12M8 34H12M16 40V44M20 40V44M24 40V44M28 40V44M32 40V44M36 40V44" stroke="#2f2f2f" strokeWidth="1.4" />
        </svg>
      );
    default:
      return (
        <svg width="50" height="48" viewBox="0 0 50 48" fill="none" stroke="#9fd8b4" strokeWidth="2.2">
          <path d="M12 20H40V47H12ZM12 20L21 10.5H49L40 20M49 10.5V38L40 47" />
          <path d="M8 0V15M0.5 7.5H15.5" strokeWidth="3.6" />
        </svg>
      );
  }
};

const toolGroups: [string, boolean][][] = [
  [["select", true], ["cursor", false]],
  [["move", false], ["rotate", false], ["scale", true], ["transform", false]],
  [["annotate", true], ["measure", false]],
  [["addcube", true]],
];

/* ---------- mesh drawing ---------- */

const D = [164, 111, 45];
const M = [185, 123, 52];
const K = [195, 132, 57];
const L = [206, 140, 61];
const B = [236, 160, 70];

type Beam = { u: number[]; l: number[]; c: number[][] };

const at = (c: number[][], t: number) => {
  const p = t * (c.length - 1);
  const i = Math.min(Math.floor(p), c.length - 2);
  const f = p - i;
  return `rgb(${c[i].map((v, k) => Math.round(v + (c[i + 1][k] - v) * f)).join(",")})`;
};

const mix = (u: number[], l: number[], t: number) => u.map((v, i) => v + (l[i] - v) * t);

const pairs = (a: number[], reverse = false) => {
  const out: string[] = [];
  for (let i = 0; i < a.length; i += 2) out.push(`${a[i].toFixed(1)},${a[i + 1].toFixed(1)}`);
  return (reverse ? out.reverse() : out).join(" ");
};

const BeamShape = ({ u, l, c }: Beam) => {
  const n = 18;
  return (
    <g>
      {Array.from({ length: n }, (_, i) => (
        <polygon key={i} points={`${pairs(mix(u, l, i / n))} ${pairs(l, true)}`} fill={at(c, (i + 0.5) / n)} />
      ))}
    </g>
  );
};

const backBeams: Beam[] = [
  { u: [889, 997, 1341, 860, 1560, 794, 2075, 637], l: [921, 1011, 1399, 860, 1560, 810, 2068, 651], c: [B, L, L, M] },
  { u: [932, 1345, 1089, 1268, 1620, 1007, 2062, 796], l: [980, 1376, 1144, 1293, 1620, 1056, 2086, 808], c: [M, M, K, K, L, B] },
  { u: [1099, 1347, 1311, 1231, 1620, 1066, 2108, 803], l: [1099, 1365, 1329, 1240, 1620, 1081, 2114, 813], c: [B, L, L, B] },
];

const midBeams: Beam[] = [
  { u: [999, 1041, 1412, 899, 1529, 860, 2110, 658], l: [1045, 1048, 1440, 908, 1578, 858, 2118, 670], c: [M, M, K, L, B] },
  { u: [1412, 1298, 1620, 1174, 2303, 748], l: [1439, 1316, 1620, 1202, 2322, 753], c: [B, L, K, M] },
];

const frontBeams: Beam[] = [
  { u: [1529, 1478, 1626, 1400, 2020, 1073, 2311, 832], l: [1529, 1506, 1656, 1401, 2040, 1077, 2358, 822], c: [B, L, K, L, L, B] },
  {
    u: [1474, 1357, 1620, 1257, 2108, 921, 2344, 759],
    l: [1529, 1437, 1620, 1364, 1955, 1092, 2311, 830],
    c: [K, M, M, M, M, M, K, L, B],
  },
];

/* right-hand end frame, drawn in its own local units */
const rightEnd: Beam[] = [
  { u: [945, 374, 1433, 410, 1455, 420], l: [912, 405, 1428, 447, 1448, 440], c: [D, D, M, B] },
  { u: [920, 92, 912, 388], l: [957, 108, 946, 400], c: [L, M, D, D] },
  { u: [1015, 120, 1007, 405], l: [1052, 165, 1044, 400], c: [B, M, D, M] },
  { u: [1312, 296, 1308, 400], l: [1335, 310, 1332, 400], c: [M, D, L] },
  { u: [940, 72, 960, 80, 1420, 308], l: [945, 104, 1050, 172, 1400, 340], c: [B, L, M, D, M] },
  { u: [1460, 350, 1456, 430], l: [1432, 350, 1428, 430], c: [B, L, M] },
];

/* left-hand end frame */
const leftEnd: Beam[] = [
  { u: [48, 350, 125, 1110], l: [80, 380, 152, 1130], c: [B, L, M] },
  { u: [425, 650, 465, 1100], l: [453, 660, 492, 1136], c: [B, L, L] },
  {
    u: [150, 1128, 250, 1157, 372, 1190, 440, 1160, 463, 1122, 494, 1134, 1090, 1286, 1265, 1425, 1300, 1430],
    l: [125, 1110, 140, 1165, 180, 1190, 300, 1223, 420, 1256, 500, 1277, 900, 1386, 1265, 1485, 1330, 1480],
    c: [M, M, K, L, B],
  },
  { u: [1080, 985, 1080, 1285, 1100, 1300, 1205, 1408], l: [1188, 1020, 1197, 1265, 1262, 1225, 1265, 1388], c: [M, D, M, L] },
  {
    u: [285, 405, 430, 495, 800, 742, 1150, 974, 1196, 1020],
    l: [400, 510, 430, 560, 800, 800, 1150, 1040, 1230, 1090],
    c: [B, L, M, D],
  },
  {
    u: [66, 308, 127, 337, 415, 532, 800, 775, 1150, 1008, 1195, 1040, 1268, 1113, 1345, 1170, 1378, 1240],
    l: [50, 370, 82, 428, 350, 615, 640, 820, 900, 993, 1080, 1115, 1180, 1184, 1250, 1235, 1264, 1260],
    c: [K, M, D, D, M],
  },
  { u: [1262, 1180, 1264, 1440, 1290, 1484], l: [1376, 1228, 1381, 1400, 1345, 1468], c: [M, D, D, M] },
];

const leftLines = [
  "208,380 1027,85 1110,96",
  "208,395 208,380 313,396",
  "222,525 272,1040 462,1086",
];
const leftDark = [
  "272,1040 460,945",
  "1027,85 1052,620 1238,652 1220,165",
  "1052,620 800,752",
];
const leftLines2 = [
  "1265,0 1060,73 1145,82",
  "1060,73 1085,603 1268,635 1252,155",
  "1085,603 1568,345",
  "1195,1020 1268,1113",
];
const rightLines = [
  "0,455 127,408 205,414",
  "127,408 132,798 275,818 271,460",
  "132,798 0,862",
  "145,402 470,287 540,292",
  "470,287 468,620 595,634 597,330",
  "468,620 290,715",
  "483,280 720,195 765,199",
  "720,195 715,487 830,497 834,235",
  "733,190 913,127 980,129",
  "915,127 906,387",
];
const rightLines2 = [
  "215,409 145,402 152,790 293,806 291,455",
  "152,790 470,622",
  "540,286 483,280 481,613 606,628 610,325",
  "783,195 733,190 726,485 838,494 846,230",
];

const Lines = ({ list, c }: { list: string[]; c: string }) => (
  <g fill="none" stroke={c} strokeWidth="4.2">
    {list.map((p) => (
      <polyline key={p} points={p} />
    ))}
  </g>
);

const LEFT = "translate(860 860) scale(0.4847 0.4464)";
const RIGHT = "translate(1560 600) scale(0.5485 0.5102)";

const Drawing = () => (
  <Scene3D width="3169" height="1664" viewBox="114 187 3169 1664">
    <defs>
      <linearGradient id="yaxis" gradientUnits="userSpaceOnUse" x1="1141" y1="1851" x2="3000" y2="285">
        <stop offset="0" stopColor="#779a3c" />
        <stop offset="0.6" stopColor="#68873a" />
        <stop offset="0.8" stopColor="#4d5c38" />
        <stop offset="0.95" stopColor="#3e403a" />
        <stop offset="1" stopColor="#3b3b3b" />
      </linearGradient>
      <linearGradient id="depth" gradientUnits="userSpaceOnUse" x1="1480" y1="1400" x2="2330" y2="790">
        <stop offset="0" stopColor="#dc953f" stopOpacity="0" />
        <stop offset="0.35" stopColor="#dc953f" stopOpacity="0.12" />
        <stop offset="0.7" stopColor="#dc953f" stopOpacity="0.55" />
        <stop offset="1" stopColor="#dc953f" stopOpacity="0.75" />
      </linearGradient>
    </defs>
    <g stroke="#404040" strokeWidth="1.6">
      <path d="M114 586L1200 520L1900 505M1900 528L3245 545M114 468L3245 478M114 412H3245M114 442L3245 446" fill="none" opacity="0.7" />
    </g>
    <path d="M114 789.7L3245 1150" stroke="#87424d" strokeWidth="3" />
    <path d="M1141 1851L3020 268" stroke="url(#yaxis)" strokeWidth="4" />

    <g transform={RIGHT}>
      {rightEnd.map((b, i) => (
        <BeamShape key={i} {...b} />
      ))}
      <path d="M1415 305Q1460 325 1460 355L1430 380L1395 340Z" fill="#dc963f" />
      <path d="M1455 425Q1455 440 1430 447L1400 444L1420 415Z" fill="#c98a3b" />
    </g>
    {backBeams.map((b, i) => (
      <BeamShape key={i} {...b} />
    ))}
    <path d="M960 1335L1560 1041L2066 800" stroke="#ad7530" strokeWidth="1.4" fill="none" />
    <g transform={LEFT}>
      <path d="M148 1080V1140L252 1162L262 1150Z" fill="#b97b34" />
      <Lines list={leftLines} c="#d68f3e" />
      <Lines list={leftDark} c="#aa732f" />
    </g>
    <g transform={RIGHT}>
      <Lines list={rightLines} c="#b97d36" />
    </g>
    {midBeams.map((b, i) => (
      <BeamShape key={i} {...b} />
    ))}
    <g transform={LEFT}>
      <Lines list={leftLines2} c="#eda047" />
      <path d="M1195 108L1238 92Q1253 115 1252 155L1222 165Q1217 130 1195 108Z" fill="#d9953f" />
      <path d="M360 430L412 412Q440 455 437 505L425 545Q405 480 340 440Z" fill="#d08c3d" />
    </g>
    <g transform={RIGHT}>
      <Lines list={rightLines2} c="#dd9741" />
      <path d="M255 416L277 410Q291 430 292 456L273 462Q272 435 255 416Z" fill="#d9953f" />
      <path d="M583 293L600 287Q611 302 612 325L597 330Q597 308 583 293Z" fill="#d9953f" />
      <path d="M822 201L836 196Q847 208 847 230L835 236Q834 215 822 201Z" fill="#d9953f" />
      <path d="M1005 113Q1028 120 1026 165L1015 165Z" fill="#eda047" />
    </g>
    {frontBeams.map((b, i) => (
      <BeamShape key={i} {...b} />
    ))}
    <path d="M1474 1357L1620 1257L2108 921L2344 759L2311 830L1955 1092L1620 1364L1529 1437Z" fill="url(#depth)" />
    <g transform={RIGHT}>
      <path d="M1412 315Q1432 308 1452 332Q1463 350 1458 365L1370 450L1290 510L1330 380Z" fill="#dd9740" />
      <path d="M1425 403L1430 402V437L1408 438L1384 440Z" fill="#3b3b3b" />
    </g>

    <g transform={LEFT}>
      {leftEnd.map((b, i) => (
        <BeamShape key={i} {...b} />
      ))}
      <path d="M50 365Q50 308 85 305L130 338L82 430Z" fill="#bb7e36" />
      <path d="M51 375Q47 310 80 307" fill="none" stroke="#e79d45" strokeWidth="6" />
      <path d="M125 1105Q130 1180 182 1190L210 1160L155 1120Z" fill="#cc8b3d" />
      <path d="M1196 1198L1243 1231L1198 1267Z" fill="#3b3b3b" />
      <path d="M1228 1415L1264 1389V1425Z" fill="#3b3b3b" />
      <path d="M1265 1432Q1330 1440 1381 1400Q1383 1440 1350 1466Q1320 1486 1270 1486Z" fill="#cc8b3d" />
      <path d="M1268 1484Q1345 1488 1380 1432" fill="none" stroke="#e79d45" strokeWidth="5" />
      <path d="M185 1189L1268 1483" stroke="#e79d45" strokeWidth="6" />
      <path d="M1178 974Q1150 968 1090 994Q1160 1000 1200 1018Z" fill="#d9953f" />
      <path d="M1085 994Q1150 1000 1187 1025" stroke="#c98a3b" strokeWidth="4" fill="none" />
      <path d="M300 406L430 492L1150 972" stroke="#e79d45" strokeWidth="5" fill="none" />
    </g>

    {/* transform gizmo */}
    <g transform={RIGHT}>
      <path d="M661 475L664 243" stroke="#3f6fc9" strokeWidth="7.4" />
      <path d="M649 245L667 170L680 245Z" fill="#4a83e8" />
      <path d="M606 532L415 515" stroke="#c9404f" strokeWidth="7" />
      <path d="M352 510L412 498Q422 515 415 530Z" fill="#dc4455" />
      <path d="M640 549L562 588" stroke="#a3c93e" strokeWidth="7" />
      <path d="M525 612L540 584Q552 572 566 584Q574 604 556 611Z" fill="#a2d143" />
      <rect x="519" y="364" width="36" height="43" fill="#64893a" stroke="#8cc33c" strokeWidth="2" />
      <path d="M604 400L620 394L619 437L603 443Z" fill="#8e3b41" stroke="#c8434f" strokeWidth="2" />
      <path d="M458 552L480 547L509 551L487 558Z" fill="#37466b" stroke="#40568f" strokeWidth="2" />
    </g>
    <circle cx="1922" cy="874" r="30" fill="none" stroke="#e2dedb" strokeWidth="4" />
    <circle cx="1921.7" cy="874" r="5.6" fill="#f5a03c" stroke="#503616" strokeWidth="2" />

    {/* 3D cursor */}
    <g fill="none" strokeWidth="2">
      <circle cx="2127.6" cy="1021.5" r="19.6" stroke="#e0302c" />
      <circle cx="2127.6" cy="1021.5" r="19.6" stroke="#fff" strokeDasharray="7.7 7.7" />
      <path d="M2129 983L2128 1011M2127 1031L2125.500 1059M2088 1016L2115 1020M2139 1022.500L2166 1025.500M2115 1031L2139 1012" stroke="#050505" />
    </g>
  </Scene3D>
);

const AxisGizmo = () => (
  <svg width="150" height="160" viewBox="2670 305 150 160" fontSize="20" textAnchor="middle">
    <path d="M2745 389V340" stroke="#4a8df5" strokeWidth="4.4" />
    <path d="M2745 389L2700 383" stroke="#8f3d47" strokeWidth="4.4" />
    <path d="M2745 389L2728 397" stroke="#9ddc3f" strokeWidth="4.4" />
    <circle cx="2687" cy="381" r="15.4" fill="#8f3d47" />
    <circle cx="2744" cy="327" r="15.4" fill="#4a8df5" />
    <circle cx="2715.500" cy="405" r="15.4" fill="#9ddc3f" />
    <circle cx="2774.300" cy="372.500" r="12.2" fill="#6a8a33" />
    <circle cx="2803" cy="396.600" r="12.2" fill="#ee4c58" />
    <circle cx="2745" cy="451" r="12.2" fill="#41649a" />
    <g fill="#000" style={{ textShadow: "none" }}>
      <text x="2744" y="334.500">Z</text>
      <text x="2687" y="388.500">X</text>
      <text x="2715.500" y="412.500">Y</text>
    </g>
  </svg>
);

const Cam = () => <MovieCam c={T} s={33} />;

const NumGroup = ({ v, wide }: { v: string[]; wide?: boolean }) => (
  <FieldRow>
    <Fields $w={wide ? 365 : 278}>
      {["X", "Y", "Z"].map((a, i) => (
        <Field key={a}>
          <Txt>{a}</Txt>
          <Txt>{v[i]}</Txt>
        </Field>
      ))}
    </Fields>
    {!wide && (
      <Locks>
        {[0, 1, 2].map((k) => (
          <I key={k} n="lock" />
        ))}
      </Locks>
    )}
  </FieldRow>
);

const RotationMode = styled(FieldRow)`
  margin-top: 7px;
`;

const Search = ({ w, ml }: { w: number; ml: number }) => (
  <Box $w={w} $ml={ml} $bg="#1d1d1d">
    <I n="search" />
  </Box>
);

const propTabs: [string, boolean?][] = [
  ["tools", true],
  ["render"],
  ["output"],
  ["layers"],
  ["scene"],
  ["world", true],
  ["object"],
  ["wrench"],
  ["particles"],
  ["physics"],
  ["constraint"],
  ["mesh"],
  ["material", true],
  ["texture"],
];

const transport: [number, string][] = [
  [24, "M1 4H4.500V24H1ZM7 14L20 5V23Z"],
  [30, "M9 4L18 14L9 24L0 14ZM20 14L30 6V22Z"],
  [26, "M2 14L22 2V26Z"],
  [26, "M24 14L4 2V26Z"],
  [30, "M21 4L30 14L21 24L12 14ZM10 14L0 6V22Z"],
  [24, "M23 4H19.500V24H23ZM17 14L4 5V23Z"],
];

export default function App() {
  return (
    <>
      <Global />
      <Desktop>
        <Shadow>
          <Window>
            <TitleBar>
              <Lights>
                <Light $dot />
                <Light />
                <Light />
              </Lights>
              <BlendFile />
              <FileTitle>mount.blend</FileTitle>
            </TitleBar>

            <TopBar>
              <Menus>
                <BlenderLogo />
                <Txt $ml={18} $w={65.5}>File</Txt>
                <Txt $w={70}>Edit</Txt>
                <Txt $w={107}>Render</Txt>
                <Txt $w={112}>Window</Txt>
                <Txt>Help</Txt>
              </Menus>
              <Tabs>
                {tabs.map(([t, w], i) => (
                  <Tab key={t} $w={w} $on={i === 0}>
                    {t === "+" ? (
                      <svg width="20" height="20" viewBox="0 0 20 20">
                        <path d="M10 1V19M1 10H19" stroke="#979797" strokeWidth="2" />
                      </svg>
                    ) : (
                      t
                    )}
                  </Tab>
                ))}
              </Tabs>
              <Spacer />
              <Idents>
                <DataBlock icon="scene" name="Scene" />
                <DataBlock icon="layers" name="View Layer" />
              </Idents>
            </TopBar>

            <Main>
              <Column $w={3169}>
                <Area $h={1664}>
                  <Drawing />
                  <Header $bg="#424242">
                    <Box $w={62} $line="#404040" $pr={3}>
                      <I n="editor3d" />
                      <Chev />
                    </Box>
                    <Slot $ml={22} $w={76}>
                      <MoveIcon />
                    </Slot>
                    <Txt $w={195}>Orientation:</Txt>
                    <Box $w={199} $ml={1} $line="#404040" $pl={6} $pr={3}>
                      <I n="local" />
                      <Txt $ml={12}>Default</Txt>
                      <Spacer />
                      <Chev />
                    </Box>
                    <Txt $ml={41} $w={78}>Drag:</Txt>
                    <Box $w={186} $line="#404040" $pl={10} $pr={3}>
                      <Txt>Select Box</Txt>
                      <Chev />
                    </Box>
                    <Box $ml={458} $w={158} $line="#404040" $pl={6} $pr={3}>
                      <I n="global" />
                      <Txt>Global</Txt>
                      <Chev />
                    </Box>
                    <Box $ml={12} $w={62} $line="#404040" $pl={6} $pr={3}>
                      <I n="pivot" />
                      <Chev />
                    </Box>
                    <Join $ml={12} $line="#404040">
                      <Seg $w={36} $bg="#595959">
                        <I n="magnet" />
                      </Seg>
                      <Seg $w={62} $between $pl={5} $pr={3}>
                        <I n="snap" />
                        <Chev />
                      </Seg>
                    </Join>
                    <Join $ml={12} $line="#404040">
                      <Seg $w={36} $bg="#595959">
                        <I n="propEdit" />
                      </Seg>
                      <Seg $w={62} $between $pl={9} $pr={3} $bg="#383838">
                        <I n="falloff" />
                        <Chev c="#5a5a5a" />
                      </Seg>
                    </Join>
                    <Spacer />
                    <Box $w={128} $pl={10} $pr={3} $line="#404040">
                      <Txt>Options</Txt>
                      <Chev />
                    </Box>
                  </Header>
                  <Header $bg="rgba(66,66,66,0.25)" $h={52} $pr={13}>
                    <Box $w={218} $pl={7} $pr={3}>
                      <I n="objectW" />
                      <Txt>Object Mode</Txt>
                      <Chev />
                    </Box>
                    <Join $ml={12} $line="#3c3c3c" $gap={4}>
                      <Seg $round $w={78} $bg="#303030"><Txt>View</Txt></Seg>
                      <Seg $round $w={91} $bg="#303030"><Txt>Select</Txt></Seg>
                      <Seg $round $w={67} $bg="#303030"><Txt>Add</Txt></Seg>
                      <Seg $round $w={95} $bg="#303030"><Txt>Object</Txt></Seg>
                    </Join>
                    <Spacer />
                    <Box $w={63} $pl={4} $pr={4}>
                      <I n="eyeCursor" />
                      <Chev />
                    </Box>
                    <Join $ml={12}>
                      <Seg $w={36} $bg="#5577b6">
                        <I n="gizmo" />
                      </Seg>
                      <Seg $w={38}>
                        <Chev />
                      </Seg>
                    </Join>
                    <Join $ml={12}>
                      <Seg $w={36} $bg="#5577b6">
                        <I n="overlay" />
                      </Seg>
                      <Seg $w={38}>
                        <Chev />
                      </Seg>
                    </Join>
                    <Join $ml={12}>
                      <Seg $w={36} $bg="#5577b6">
                        <I n="xray" />
                      </Seg>
                    </Join>
                    <Join $ml={12}>
                      <Seg $w={36} $bg="#5577b6">
                        <I n="wire" />
                      </Seg>
                      <Seg $w={36} $bg="#595959">
                        <I n="solid" />
                      </Seg>
                      <Seg $w={36} $bg="#595959">
                        <I n="matprev" />
                      </Seg>
                      <Seg $w={36} $bg="#595959">
                        <I n="rendered" />
                      </Seg>
                      <Seg $w={38} $pr={3}>
                        <Chev />
                      </Seg>
                    </Join>
                  </Header>

                  <Body>
                    <ToolColumn>
                      {toolGroups.map((g, i) => (
                        <ToolGroup key={i}>
                          {g.map(([n, more]) => (
                            <Tool key={n} $on={n === "move"} $more={more}>
                              {toolIcon(n)}
                            </Tool>
                          ))}
                        </ToolGroup>
                      ))}
                    </ToolColumn>
                    <ViewInfo>
                      <Txt>User Perspective</Txt>
                      <Txt>(0) Collection | Cube</Txt>
                    </ViewInfo>
                    <Spacer />
                    <NavColumn>
                      <AxisGizmo />
                      <NavBtn>
                        <svg width="34" height="34" viewBox="0 0 34 34" fill={T}>
                          <circle cx="20" cy="14" r="13" />
                          <path d="M12 22L2 31" stroke={T} strokeWidth="4" />
                          <path d="M20 7.500V20.500M13.500 14H26.500" stroke="#2d2d2d" strokeWidth="2.2" />
                        </svg>
                      </NavBtn>
                      <NavBtn>
                        <svg width="34" height="34" viewBox="0 0 34 34" fill="none" stroke={T} strokeLinecap="round">
                          <path d="M3 18L11 25M10.500 7L13.500 18M17.500 3.500V17M24.500 5L22.500 18M31 11L26.500 20" strokeWidth="4" />
                          <path d="M9 22L12 16H27L28 20Q26 33 18.500 33T9 22Z" fill={T} stroke="none" />
                        </svg>
                      </NavBtn>
                      <NavBtn>
                        <Cam />
                      </NavBtn>
                      <NavBtn>
                        <svg width="34" height="28" viewBox="0 0 34 28" fill="none" stroke={T} strokeWidth="2.2">
                          <path d="M9 1.500H25L32.500 26.500H1.500ZM7 9H27M4.500 17H29.500M14.500 1.500L12 26.500M19.500 1.500L22 26.500" />
                        </svg>
                      </NavBtn>
                    </NavColumn>
                    <Panel>
                      <PanelHead>
                        <PanelTitle>
                          <Tri down />
                          <Txt>Transform</Txt>
                        </PanelTitle>
                        <svg width="22" height="10" viewBox="0 0 22 10">
                          <path d="M0 2H22M0 7H22" stroke="#8a8a8a" strokeWidth="3" strokeDasharray="2.6 3.800" />
                        </svg>
                      </PanelHead>
                      <PanelBody>
                        <Label><Txt>Location:</Txt></Label>
                        <NumGroup v={["25.5 mm", "0 mm", "15 mm"]} />
                        <Label><Txt>Rotation:</Txt></Label>
                        <NumGroup v={["0°", "0°", "0°"]} />
                        <RotationMode>
                          <Box $w={368} $ml={-1} $pl={13} $pr={3}>
                            <Txt>XYZ Euler</Txt>
                            <Chev />
                          </Box>
                        </RotationMode>
                        <Label><Txt>Scale:</Txt></Label>
                        <NumGroup v={["1.000", "1.000", "1.000"]} />
                        <Label><Txt>Dimensions:</Txt></Label>
                        <NumGroup wide v={["51 mm", "270 mm", "29.3 mm"]} />
                      </PanelBody>
                    </Panel>
                    <Strip>
                      <StripTab $h={81} $on>Item</StripTab>
                      <StripTab $h={73}>Tool</StripTab>
                      <StripTab $h={83}>View</StripTab>
                    </Strip>
                  </Body>
                </Area>

                <Area $h={134} $bg="#2a2a2a">
                  <Header $pr={13}>
                    <Box $w={62} $pr={3}>
                      <I n="clock" />
                      <Chev />
                    </Box>
                    <Join $ml={11} $line="#464646">
                      <Seg $w={142} $between $pl={12} $pr={3}>
                        <Txt>Playback</Txt>
                        <Chev />
                      </Seg>
                      <Seg $w={120} $between $pl={12} $pr={3}>
                        <Txt>Keying</Txt>
                        <Chev />
                      </Seg>
                    </Join>
                    <Txt $ml={19} $w={80}>View</Txt>
                    <Txt>Marker</Txt>
                    <Spacer />
                    <Join $line="#404040">
                      <Seg $w={36} $bg="#595959">
                        <svg width="18" height="18" viewBox="0 0 18 18">
                          <circle cx="9" cy="9" r="8.500" fill="#d8d8d8" />
                        </svg>
                      </Seg>
                      <Seg $w={38} $bg="#323232">
                        <Chev c="#505050" />
                      </Seg>
                    </Join>
                    <Join $ml={12} $line="#3c3c3c">
                      {transport.map(([w, d], i) => (
                        <Seg key={i} $w={i % 5 === 0 ? 37 : 38} $bg="#595959">
                          <svg width={w} height="28" viewBox={`0 0 ${w} 28`} fill="#e8e8e8">
                            <path d={d} />
                          </svg>
                        </Seg>
                      ))}
                    </Join>
                    <Slot $ml={881} />
                    <Join $line="#4a4a4a">
                      <Seg $w={146} $bg="#595959"><Txt>0</Txt></Seg>
                    </Join>
                    <Join $ml={12} $line="#484848">
                      <Seg $w={36} $bg="#595959">
                        <I n="stopwatch" />
                      </Seg>
                      <Seg $w={178} $bg="#595959" $between $pl={30} $pr={24}>
                        <Txt>Start</Txt>
                        <Txt>1</Txt>
                      </Seg>
                      <Seg $w={169} $bg="#595959" $between $pl={29} $pr={25}>
                        <Txt>End</Txt>
                        <Txt>250</Txt>
                      </Seg>
                    </Join>
                  </Header>
                  <Ruler>
                    {Array.from({ length: 26 }, (_, i) => (
                      <Mark key={i}>{i === 0 ? <Playhead>0</Playhead> : i * 10}</Mark>
                    ))}
                  </Ruler>
                  <Track>
                    {Array.from({ length: 26 }, (_, i) => (
                      <TickCell key={i}>
                        <Tick $play={i === 0} $end={i === 25} />
                      </TickCell>
                    ))}
                    <StartLine />
                    <Scroll>
                      <Knob />
                      <Knob />
                    </Scroll>
                  </Track>
                  <Stalk />
                  <Expander>
                    <svg width="9" height="16" viewBox="0 0 9 16">
                      <path d="M1 1L7 8L1 15" fill="none" stroke="#8a8a8a" strokeWidth="1.8" />
                    </svg>
                  </Expander>
                  <Expander $right>
                    <svg width="9" height="16" viewBox="0 0 9 16">
                      <path d="M8 1L2 8L8 15" fill="none" stroke="#8a8a8a" strokeWidth="1.8" />
                    </svg>
                  </Expander>
                </Area>
              </Column>

              <Column $w={659}>
                <Area $h={577} $bg="#282828">
                  <Header $bg="#3a3a3a" $pl={17} $pr={16}>
                    <Box $w={62} $pr={4}>
                      <I n="outliner" />
                      <Chev />
                    </Box>
                    <Box $w={62} $ml={12} $pr={4}>
                      <I n="layers" />
                      <Chev />
                    </Box>
                    <Search w={231} ml={40} />
                    <Spacer />
                    <Box $w={62} $pl={3} $pr={4}>
                      <I n="filter" />
                      <Chev />
                    </Box>
                    <Box $w={38} $ml={12} $bg="#595959" $pl={3} $pr={3}>
                      <I n="newColl" />
                    </Box>
                  </Header>
                  <Row $pl={45}>
                    <I n="collection" />
                    <RowText $ml={13}>Scene Collection</RowText>
                  </Row>
                  <Row $odd $pl={52}>
                    <Tri down />
                    <Slot $ml={16}>
                      <Hl $on>
                        <I n="collection" />
                      </Hl>
                    </Slot>
                    <RowText $ml={9}>Collection</RowText>
                    <Spacer />
                    <Check>
                      <svg width="16" height="16" viewBox="0 0 16 16">
                        <path d="M2 8L6 13L14 2" fill="none" stroke="#222" strokeWidth="3" />
                      </svg>
                    </Check>
                    <I n="eye" />
                  </Row>
                  <Row $pl={94}>
                    <Tri />
                    <Slot $ml={13}>
                      <Hl>
                        <MovieCam />
                      </Hl>
                    </Slot>
                    <RowText $ml={9} $w={125}>Camera</RowText>
                    <Hl $on>
                      <MovieCam c="#4fb795" outline />
                    </Hl>
                    <Spacer />
                    <I n="eye" />
                  </Row>
                  <Row $sel $odd $pl={94}>
                    <Tri />
                    <Slot $ml={13}>
                      <Hl $on $blue>
                        <svg width="28" height="30" viewBox="0 0 28 30">
                          <path fillRule="evenodd" d="M0 1H28L17 29H11ZM8 7L14 22L20 7Z" fill="#c99468" />
                        </svg>
                      </Hl>
                    </Slot>
                    <RowText $ml={9} $w={100}>Cube</RowText>
                    <I n="mesh" />
                    <Spacer />
                    <I n="eye" />
                  </Row>
                  <Row $pl={94}>
                    <Tri />
                    <Slot $ml={13}>
                      <Hl>
                        <Bulb />
                      </Hl>
                    </Slot>
                    <RowText $ml={9} $w={99}>Light</RowText>
                    <LightData />
                    <Spacer />
                    <I n="eye" />
                  </Row>
                  {Array.from({ length: 9 }, (_, i) => (
                    <Row key={i} $pl={0} $odd={i % 2 === 0} />
                  ))}
                  <TreeLine />
                </Area>

                <Area $h={1221} $bg="#424242">
                  <Header $pr={15}>
                    <Box $w={62} $pr={4}>
                      <I n="propsEd" />
                      <Chev />
                    </Box>
                    <Search w={231} ml={139} />
                    <Spacer />
                    <Box $w={39} $pl={9} $pr={9}>
                      <Chev />
                    </Box>
                  </Header>
                  <Body>
                    <PropTabs>
                      {propTabs.map(([n, gap]) => (
                        <PropTab key={n} $gap={gap} $on={n === "wrench"}>
                          <I n={n} />
                        </PropTab>
                      ))}
                    </PropTabs>
                    <PropBody>
                      <Crumb>
                        <I n="objectW" />
                        <Txt $ml={17}>Cube</Txt>
                        <Spacer />
                        <I n="pin" />
                      </Crumb>
                      <Box $pl={11} $pr={2} $line="#3e3e3e">
                        <Txt>Add Modifier</Txt>
                        <Chev />
                      </Box>
                    </PropBody>
                  </Body>
                </Area>
              </Column>
            </Main>

            <Status>
              <Mouse b="l" />
              <Txt $ml={10} $w={87}>Select</Txt>
              <Mouse b="l" drag />
              <Txt $ml={15} $w={360}>Box Select</Txt>
              <Mouse b="m" />
              <Txt $ml={9} $w={492}>Dolly View</Txt>
              <Mouse b="r" drag />
              <Txt $ml={13}>Lasso Select</Txt>
              <Spacer />
              <Txt>2.92.0</Txt>
            </Status>
          </Window>
        </Shadow>
      </Desktop>
    </>
  );
}
